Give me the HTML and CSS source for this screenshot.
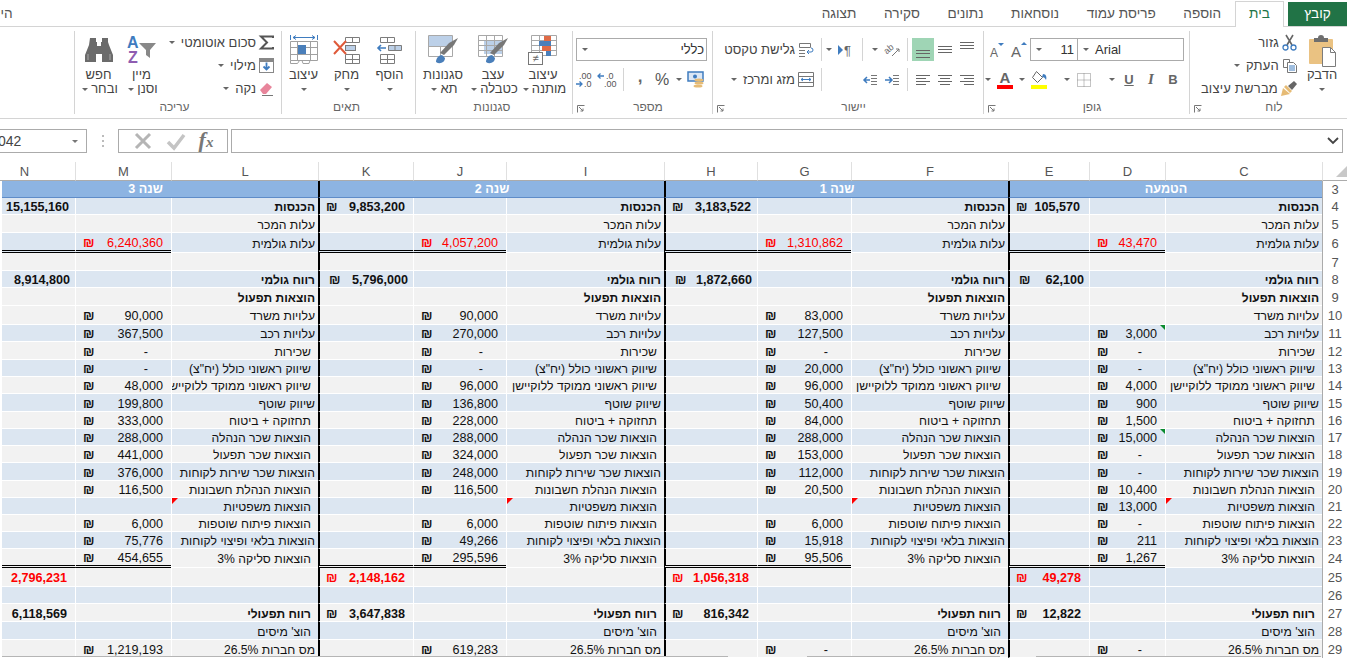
FILE: index.html
```
<!DOCTYPE html>
<html lang="he" dir="rtl">
<head>
    <meta charset="UTF-8">
    <meta name="viewport" content="width=device-width, initial-scale=1.0">
    <title>תחזית רווח והפסד</title>
    <link rel="stylesheet" href="styles.css">
</head>
<body>
    <!-- טאבים -->
    <nav class="tabs">
        <div class="tab tab-file">קובץ</div>
        <div class="tab tab-active">בית</div>
        <div class="tab">הוספה</div>
        <div class="tab">פריסת עמוד</div>
        <div class="tab">נוסחאות</div>
        <div class="tab">נתונים</div>
        <div class="tab">סקירה</div>
        <div class="tab">תצוגה</div>
        <div class="tab tab-cut">היי</div>
    </nav>

    <!-- רצועת כלים -->
    <section class="ribbon">
        <div class="group g-clip">
            <div class="group-body">
                <div class="big b-paste">
                    <div class="big-icon">
                        <svg width="30" height="34" viewBox="0 0 30 34"><rect x="2" y="6" width="24" height="25" rx="1" fill="#eac282"/><path d="M7 5h4a3 3 0 0 1 6 0h4v4H7z" fill="#6e6e6e"/><path d="M15.500 14.500h8l5 5v14h-13z" fill="#fff" stroke="#7c7c7c"/><path d="M23.500 14.500v5h5" fill="none" stroke="#7c7c7c"/></svg>
                    </div>
                    <div class="big-label">הדבק</div>
                    <i class="caret caret-line"></i>
                </div>
                <div class="stack">
                    <div class="sm">
                        <svg width="15" height="17" viewBox="0 0 15 17"><path d="M4 1l6 10M11 1L5 11" stroke="#666" stroke-width="1.600" fill="none"/><circle cx="3.500" cy="13.500" r="2.500" fill="none" stroke="#3f7cbf" stroke-width="1.300"/><circle cx="11.500" cy="13.500" r="2.500" fill="none" stroke="#3f7cbf" stroke-width="1.300"/></svg>
                        <span>גזור</span>
                    </div>
                    <div class="sm">
                        <svg width="15" height="15" viewBox="0 0 15 15"><path d="M1.500 1.500h6v8h-6z" fill="#fff" stroke="#777"/><path d="M5.500 4.500h6l3 3v7h-9z" fill="#fff" stroke="#777"/><path d="M7 8h6M7 10h6M7 12h6" stroke="#3f7cbf"/></svg>
                        <span>העתק</span>
                        <i class="caret"></i>
                    </div>
                    <div class="sm">
                        <svg width="16" height="16" viewBox="0 0 16 16"><path d="M0 15l2-8 7 6z" fill="#e6bb75"/><path d="M3 6l6 6 2-2-6-6z" fill="#e6bb75"/><path d="M7 5l4 4 5-6-3-3z" fill="#666"/></svg>
                        <span>מברשת עיצוב</span>
                    </div>
                </div>
            </div>
            <div class="group-name with-launcher">לוח</div>
            <svg class="launcher" width="8" height="8" viewBox="0 0 8 8"><path d="M.5 7.500v-7h7M2 2l4 4M6 3.500V6H3.500" fill="none" stroke="#777"/></svg>
        </div>

        <div class="group g-font">
            <div class="group-body rows">
                <div class="row">
                    <div class="select select-font"><i class="caret"></i><span>Arial</span></div>
                    <div class="select select-size"><i class="caret"></i><span>11</span></div>
                    <div class="slot">
                        <svg width="20" height="20" viewBox="0 0 20 20"><text x="2" y="17" class="svg-a" font-size="15">A</text><path d="M12 5l3-3 3 3z" fill="#3f7cbf"/></svg>
                    </div>
                    <div class="slot">
                        <svg width="20" height="20" viewBox="0 0 20 20"><text x="3" y="17" class="svg-a" font-size="12">A</text><path d="M11 3l3 3 3-3z" fill="#3f7cbf"/></svg>
                    </div>
                </div>
                <div class="row">
                    <div class="slot fs fs-b">B</div>
                    <div class="slot fs fs-i">I</div>
                    <div class="slot fs fs-u">U</div>
                    <i class="caret"></i>
                    <div class="sep"></div>
                    <div class="slot">
                        <svg width="14" height="14" viewBox="0 0 14 14"><path d="M.500.500h13v13H.500zM.500 7h13M7 .500v13" fill="none" stroke="#888" stroke-dasharray="1 1"/></svg>
                    </div>
                    <i class="caret"></i>
                    <div class="sep"></div>
                    <div class="slot">
                        <svg width="18" height="19" viewBox="0 0 18 19"><path d="M6.500 1.500l6 6-5 5-5-5z" fill="#fff" stroke="#666"/><path d="M13 4c3 0 4 3 3 6-1-2-2-3-4-3z" fill="#3f7cbf"/><rect x="1" y="15" width="16" height="4" fill="#ff0"/></svg>
                    </div>
                    <i class="caret"></i>
                    <div class="slot">
                        <svg width="18" height="19" viewBox="0 0 18 19"><text x="9" y="13" text-anchor="middle" class="svg-a" font-size="15" font-weight="bold">A</text><rect x="1" y="15" width="16" height="4" fill="#f00"/></svg>
                    </div>
                    <i class="caret"></i>
                </div>
            </div>
            <div class="group-name with-launcher">גופן</div>
            <svg class="launcher" width="8" height="8" viewBox="0 0 8 8"><path d="M.5 7.500v-7h7M2 2l4 4M6 3.500V6H3.500" fill="none" stroke="#777"/></svg>
        </div>

        <div class="group g-align">
            <div class="group-body">
                <div class="align-main rows">
                    <div class="row">
                        <div class="slot"><svg width="16" height="16" viewBox="0 0 16 16"><path d="M1 .500h14M1 3.500h14M1 6.500h14" stroke="#666"/></svg></div>
                        <div class="slot"><svg width="16" height="16" viewBox="0 0 16 16"><path d="M1 4.500h14M1 7.500h14M1 10.500h14" stroke="#666"/></svg></div>
                        <div class="slot slot-on"><svg width="16" height="16" viewBox="0 0 16 16"><path d="M1 8.500h14M1 11.500h14M1 15.500h14" stroke="#666"/></svg></div>
                        <div class="sep sep-a"></div>
                        <div class="slot">
                            <svg width="18" height="18" viewBox="0 0 18 18"><text x="1" y="10" transform="rotate(-40 7 8)" class="svg-a" font-size="9">ab</text><path d="M9 15l7-7M16 11V8h-3" fill="none" stroke="#777"/></svg>
                        </div>
                        <i class="caret"></i>
                        <div class="sep"></div>
                        <div class="slot">
                            <svg width="18" height="14" viewBox="0 0 18 14"><path d="M1 2l5 5-5 5z" fill="#3f7cbf"/><text x="7" y="12" class="svg-a" font-size="13">¶</text></svg>
                        </div>
                        <i class="caret"></i>
                    </div>
                    <div class="row">
                        <div class="slot"><svg width="16" height="16" viewBox="0 0 16 16"><path d="M1 3.500h14M5 6.500h10M1 9.500h14M5 12.500h10" stroke="#666"/></svg></div>
                        <div class="slot"><svg width="16" height="16" viewBox="0 0 16 16"><path d="M1 3.500h14M3 6.500h10M1 9.500h14M3 12.500h10" stroke="#666"/></svg></div>
                        <div class="slot"><svg width="16" height="16" viewBox="0 0 16 16"><path d="M1 3.500h14M1 6.500h10M1 9.500h14M1 12.500h10" stroke="#666"/></svg></div>
                        <div class="sep sep-a"></div>
                        <div class="slot"><svg width="16" height="14" viewBox="0 0 16 14"><path d="M1 7h6M5 4l3 3-3 3" fill="none" stroke="#3f7cbf" stroke-width="1.500"/><path d="M9 2.500h6M9 5.500h6M9 8.500h6M9 11.500h6" stroke="#777"/></svg></div>
                        <div class="slot"><svg width="16" height="14" viewBox="0 0 16 14"><path d="M8 7H2M5 4L2 7l3 3" fill="none" stroke="#3f7cbf" stroke-width="1.500"/><path d="M9 2.500h6M9 5.500h6M9 8.500h6M9 11.500h6" stroke="#777"/></svg></div>
                    </div>
                </div>
                <div class="align-wrap rows">
                    <div class="row">
                        <div class="sm sm-flat">
                            <svg width="16" height="15" viewBox="0 0 16 15"><path d="M1.500 1.500h11v4h-11zM1 8.500h6M1 11.500h6M1 14.500h6" fill="none" stroke="#777"/><path d="M9 10h4a2 2 0 0 0 0-4M11 8l-2 2 2 2" fill="none" stroke="#3f7cbf"/></svg>
                            <span>גלישת טקסט</span>
                        </div>
                    </div>
                    <div class="row">
                        <div class="sm sm-flat">
                            <svg width="16" height="15" viewBox="0 0 16 15"><path d="M.500.500h15v14H.500zM.500 4.500h15M.500 10.500h15" fill="none" stroke="#777"/><path d="M3 7.500h10M5 6L3 7.500 5 9M11 6l2 1.500L11 9" fill="none" stroke="#3f7cbf"/></svg>
                            <span>מזג ומרכז</span>
                            <i class="caret"></i>
                        </div>
                    </div>
                </div>
            </div>
            <div class="group-name with-launcher">יישור</div>
            <svg class="launcher" width="8" height="8" viewBox="0 0 8 8"><path d="M.5 7.500v-7h7M2 2l4 4M6 3.500V6H3.500" fill="none" stroke="#777"/></svg>
        </div>

        <div class="group g-number">
            <div class="group-body rows">
                <div class="row">
                    <div class="select select-num"><span>כללי</span><i class="caret"></i></div>
                </div>
                <div class="row">
                    <div class="slot">
                        <svg width="18" height="17" viewBox="0 0 18 17"><rect x="1" y="1" width="15" height="9" fill="#dbe7f5" stroke="#3f7cbf" stroke-width="1.500"/><circle cx="8" cy="5.500" r="2" fill="#3f7cbf"/><ellipse cx="12" cy="9" rx="4.500" ry="1.600" fill="#e6bb75"/><ellipse cx="12" cy="12" rx="4.500" ry="1.600" fill="#e6bb75"/><ellipse cx="11" cy="15" rx="4.500" ry="1.600" fill="#e6bb75"/></svg>
                    </div>
                    <i class="caret"></i>
                    <div class="slot fs fs-pct">%</div>
                    <div class="slot fs fs-comma">,</div>
                    <div class="sep sep-n"></div>
                    <div class="slot">
                        <svg width="20" height="17" viewBox="0 0 20 17"><text x="9" y="8" class="svg-d">.0</text><text x="7" y="16" class="svg-d">.00</text><path d="M7 5H1M3.500 2.500L1 5l2.500 2.500" fill="none" stroke="#3f7cbf" stroke-width="1.300"/></svg>
                    </div>
                    <div class="slot">
                        <svg width="20" height="17" viewBox="0 0 20 17"><text x="4" y="8" class="svg-d">.00</text><text x="9" y="16" class="svg-d">.0</text><path d="M1 13h6M4.500 10.500L7 13l-2.500 2.500" fill="none" stroke="#3f7cbf" stroke-width="1.300"/></svg>
                    </div>
                </div>
            </div>
            <div class="group-name with-launcher">מספר</div>
            <svg class="launcher" width="8" height="8" viewBox="0 0 8 8"><path d="M.5 7.500v-7h7M2 2l4 4M6 3.500V6H3.500" fill="none" stroke="#777"/></svg>
        </div>

        <div class="group g-styles">
            <div class="group-body">
                <div class="big">
                    <div class="big-icon">
                        <svg width="30" height="32" viewBox="0 0 30 32"><path d="M3.500 1.500h25v20h-25zM3.500 6.500h25M3.500 11.500h25M3.500 16.500h25M11.500 1.500v20M20.500 1.500v20" fill="none" stroke="#a8a8a8"/><rect x="16" y="2" width="7" height="5" fill="#df6a46"/><rect x="11" y="7" width="12" height="5" fill="#4a7fba"/><rect x="14" y="12" width="9" height="5" fill="#df6a46"/><rect x="18" y="17" width="5" height="5" fill="#4a7fba"/><rect x=".500" y="18.500" width="14" height="12" fill="#fff" stroke="#777"/><text x="7.500" y="28" text-anchor="middle" class="svg-a" font-size="11">≠</text></svg>
                    </div>
                    <div class="big-label">עיצוב<br><span>מותנה</span><i class="caret"></i></div>
                </div>
                <div class="big">
                    <div class="big-icon">
                        <svg width="32" height="32" viewBox="0 0 32 32"><rect x="7" y="7" width="19" height="13" fill="#bcd0e8"/><path d="M1.500 1.500h24v21h-24zM1.500 6.500h24M1.500 11.500h24M1.500 16.500h24M9.500 1.500v21M17.500 1.500v21" fill="none" stroke="#a8a8a8"/><path d="M17 21l10-10 4-7-9 5-9 10z" fill="#777"/><path d="M9 28c0-4 3-7 6-7l3 3c0 4-5 7-9 4z" fill="#4a7fba"/></svg>
                    </div>
                    <div class="big-label">עצב<br><span>כטבלה</span><i class="caret"></i></div>
                </div>
                <div class="big">
                    <div class="big-icon">
                        <svg width="32" height="32" viewBox="0 0 32 32"><rect x="2" y="2" width="23" height="10" fill="#bcd0e8"/><path d="M1.500 1.500h24v21h-24zM1.500 12.500h24" fill="none" stroke="#a8a8a8"/><path d="M13.500 12.500v10" stroke="#a8a8a8"/><path d="M17 21l10-10 4-7-9 5-9 10z" fill="#777"/><path d="M9 28c0-4 3-7 6-7l3 3c0 4-5 7-9 4z" fill="#4a7fba"/></svg>
                    </div>
                    <div class="big-label">סגנונות<br><span>תא</span><i class="caret"></i></div>
                </div>
            </div>
            <div class="group-name">סגנונות</div>
        </div>

        <div class="group g-cells">
            <div class="group-body">
                <div class="big big-cell">
                    <div class="big-icon">
                        <svg width="27" height="28" viewBox="0 0 27 28"><path d="M4.500 1.500h14v5h-14zM11.500 1.500v5M4.500 18.500h14v9h-14zM4.500 23.500h14M11.500 18.500v9" fill="none" stroke="#7c7c7c"/><path d="M12.500 9.500h13v5h-13zM19 9.500v5" fill="#bcd0e8" stroke="#7c7c7c"/><path d="M10 12H2M5 9l-3 3 3 3" fill="none" stroke="#3f7cbf" stroke-width="1.600"/></svg>
                    </div>
                    <div class="big-label">הוסף</div>
                    <i class="caret caret-line"></i>
                </div>
                <div class="big big-cell">
                    <div class="big-icon">
                        <svg width="27" height="28" viewBox="0 0 27 28"><path d="M12.500 1.500h14v5h-14zM19.500 1.500v5M12.500 18.500h14v9h-14zM12.500 23.500h14M19.500 18.500v9" fill="none" stroke="#7c7c7c"/><rect x="12.500" y="9.500" width="10" height="5" fill="#bcd0e8" stroke="#7c7c7c"/><path d="M1 5l12 13M13 5L1 18" stroke="#df5a3a" stroke-width="2"/></svg>
                    </div>
                    <div class="big-label">מחק</div>
                    <i class="caret caret-line"></i>
                </div>
                <div class="big big-cell">
                    <div class="big-icon">
                        <svg width="28" height="31" viewBox="0 0 28 31"><path d="M.500 1v5M27.500 1v5M3 3.500h22M6 1.500L3 3.500l3 2M22 1.500l3 2-3 2" fill="none" stroke="#3f7cbf"/><path d="M.500 7.500h27v19h-27zM.500 13.500h27M.500 20.500h27M7.500 7.500v19M20.500 7.500v19" fill="none" stroke="#a0a0a0"/><rect x="8" y="11" width="8" height="9" fill="#4a7fba"/><path d="M.500 26.500v3h7l2-3M12 26.500l1 3h6l1-3" fill="none" stroke="#a0a0a0"/></svg>
                    </div>
                    <div class="big-label">עיצוב</div>
                    <i class="caret caret-line"></i>
                </div>
            </div>
            <div class="group-name">תאים</div>
        </div>

        <div class="group g-edit">
            <div class="group-body">
                <div class="stack stack-edit">
                    <div class="sm">
                        <svg width="15" height="15" viewBox="0 0 15 15"><path d="M14 3V1.500H2L8 7.500 2 13.500h12V12" fill="none" stroke="#555" stroke-width="2"/></svg>
                        <span>סכום אוטומטי</span>
                        <i class="caret"></i>
                    </div>
                    <div class="sm">
                        <svg width="15" height="15" viewBox="0 0 15 15"><rect x=".500" y=".500" width="14" height="14" fill="#fff" stroke="#888"/><rect x="1" y="1" width="13" height="3" fill="#888"/><path d="M7.500 4.500v7M4.500 8.500l3 3 3-3" fill="none" stroke="#3f7cbf" stroke-width="1.800"/></svg>
                        <span>מילוי</span>
                        <i class="caret"></i>
                    </div>
                    <div class="sm">
                        <svg width="15" height="15" viewBox="0 0 15 15"><path d="M1 9l7-7 5 4-6 7H4z" fill="#e8859b"/><path d="M3 14.500h11" stroke="#777"/></svg>
                        <span>נקה</span>
                        <i class="caret"></i>
                    </div>
                </div>
                <div class="big big-cell">
                    <div class="big-icon">
                        <svg width="30" height="32" viewBox="0 0 30 32"><text x="0" y="14" class="svg-s" fill="#3f7cbf">A</text><text x="1" y="29" class="svg-s" fill="#8e5cb0">Z</text><path d="M12 9h17l-6 7v8l-4-3v-5z" fill="#888"/></svg>
                    </div>
                    <div class="big-label">מיין<br><span>וסנן</span><i class="caret"></i></div>
                </div>
                <div class="big big-cell">
                    <div class="big-icon">
                        <svg width="28" height="26" viewBox="0 0 28 26"><path d="M5 1h6v4h1v4h4V5h1V1h6v4l1 3 4 10v7H17v-8h-6v8H0v-7L4 8z" fill="#6b6b6b"/><path d="M3 17v6M25 17v6" stroke="#aaa"/></svg>
                    </div>
                    <div class="big-label">חפש<br><span>ובחר</span><i class="caret"></i></div>
                </div>
            </div>
            <div class="group-name">עריכה</div>
        </div>
    </section>

    <!-- שורת נוסחאות -->
    <section class="formula-bar">
        <div class="name-box"><span>042</span><i class="caret caret-dark"></i></div>
        <div class="dots"></div>
        <div class="fx-box">
            <svg width="20" height="20" viewBox="0 0 20 20"><path d="M3 3l14 14M17 3L3 17" stroke="#b5b5b5" stroke-width="3"/></svg>
            <svg width="20" height="20" viewBox="0 0 20 20"><path d="M2 11l6 6L18 4" fill="none" stroke="#c4c4c4" stroke-width="3.500"/></svg>
            <span class="fx">f<small>x</small></span>
        </div>
        <div class="formula-input">
            <svg width="12" height="8" viewBox="0 0 12 8"><path d="M1 1l5 5 5-5" fill="none" stroke="#444" stroke-width="1.800"/></svg>
        </div>
    </section>

    <!-- גיליון -->
    <main class="sheet">
        <table class="grid">
            <colgroup>
                <col class="c-rn"><col class="c-c"><col class="c-d"><col class="c-e"><col class="c-f"><col class="c-g"><col class="c-h"><col class="c-i"><col class="c-j"><col class="c-k"><col class="c-l"><col class="c-m"><col class="c-n">
            </colgroup>
            <thead>
                <tr>
                    <th class="corner"><svg width="11" height="11" viewBox="0 0 11 11"><path d="M11 0v11H0z" fill="#c8c8c8"/></svg></th>
                    <th>C</th><th>D</th><th>E</th><th>F</th><th>G</th><th>H</th><th>I</th><th>J</th><th>K</th><th>L</th><th>M</th><th>N</th>
                </tr>
            </thead>
            <tbody>
                <tr class="yr h17"><th>3</th><td colspan="3" class="thick">הטמעה</td><td colspan="3" class="thick">שנה 1</td><td colspan="3" class="thick">שנה 2</td><td colspan="3">שנה 3</td></tr>
                <tr class="h17 blue bd"><th>4</th><td>הכנסות</td><td></td><td class="n e9"><i>₪</i>105,570</td><td>הכנסות</td><td></td><td class="n e6"><i>₪</i>3,183,522</td><td>הכנסות</td><td></td><td class="n"><i>₪</i>9,853,200</td><td>הכנסות</td><td></td><td class="n e6">15,155,160</td></tr>
                <tr class="h18"><th>5</th><td>עלות המכר</td><td></td><td></td><td>עלות המכר</td><td></td><td></td><td>עלות המכר</td><td></td><td></td><td>עלות המכר</td><td></td><td></td></tr>
                <tr class="h20 blue dbl"><th>6</th><td class="lb">עלות גולמית</td><td class="n red"><i>₪</i>43,470</td><td></td><td class="lb">עלות גולמית</td><td class="n red"><i>₪</i>1,310,862</td><td></td><td class="lb">עלות גולמית</td><td class="n red"><i>₪</i>4,057,200</td><td></td><td class="lb">עלות גולמית</td><td class="n red"><i>₪</i>6,240,360</td><td></td></tr>
                <tr class="h18"><th>7</th><td></td><td></td><td></td><td></td><td></td><td></td><td></td><td></td><td></td><td></td><td></td><td></td></tr>
                <tr class="h17 blue bd shift"><th>8</th><td>רווח גולמי</td><td></td><td class="n"><i>₪</i>62,100</td><td>רווח גולמי</td><td></td><td class="n"><i>₪</i>1,872,660</td><td>רווח גולמי</td><td></td><td class="n"><i>₪</i>5,796,000</td><td>רווח גולמי</td><td></td><td class="n">8,914,800</td></tr>
                <tr class="h18 bd"><th>9</th><td>הוצאות תפעול</td><td></td><td></td><td>הוצאות תפעול</td><td></td><td></td><td>הוצאות תפעול</td><td></td><td></td><td>הוצאות תפעול</td><td></td><td></td></tr>
                <tr class="h19"><th>10</th><td>עלויות משרד</td><td></td><td></td><td>עלויות משרד</td><td class="n"><i>₪</i>83,000</td><td></td><td>עלויות משרד</td><td class="n"><i>₪</i>90,000</td><td></td><td>עלויות משרד</td><td class="n"><i>₪</i>90,000</td><td></td></tr>
                <tr class="h17 blue"><th>11</th><td>עלויות רכב</td><td class="n green"><i>₪</i>3,000</td><td></td><td>עלויות רכב</td><td class="n"><i>₪</i>127,500</td><td></td><td>עלויות רכב</td><td class="n"><i>₪</i>270,000</td><td></td><td>עלויות רכב</td><td class="n"><i>₪</i>367,500</td><td></td></tr>
                <tr class="h18 ind"><th>12</th><td>שכירות</td><td class="n d"><i>₪</i>-</td><td></td><td>שכירות</td><td class="n d"><i>₪</i>-</td><td></td><td>שכירות</td><td class="n d"><i>₪</i>-</td><td></td><td>שכירות</td><td class="n d"><i>₪</i>-</td><td></td></tr>
                <tr class="h17 blue ind"><th>13</th><td>שיווק ראשוני כולל (יח"צ)</td><td class="n d"><i>₪</i>-</td><td></td><td>שיווק ראשוני כולל (יח"צ)</td><td class="n"><i>₪</i>20,000</td><td></td><td>שיווק ראשוני כולל (יח"צ)</td><td class="n d"><i>₪</i>-</td><td></td><td>שיווק ראשוני כולל (יח"צ)</td><td class="n d"><i>₪</i>-</td><td></td></tr>
                <tr class="h17 ind"><th>14</th><td>שיווק ראשוני ממוקד ללוקיישן</td><td class="n"><i>₪</i>4,000</td><td></td><td>שיווק ראשוני ממוקד ללוקיישן</td><td class="n"><i>₪</i>96,000</td><td></td><td>שיווק ראשוני ממוקד ללוקיישן</td><td class="n"><i>₪</i>96,000</td><td></td><td>שיווק ראשוני ממוקד ללוקיישן</td><td class="n"><i>₪</i>48,000</td><td></td></tr>
                <tr class="h18 blue"><th>15</th><td>שיווק שוטף</td><td class="n"><i>₪</i>900</td><td></td><td>שיווק שוטף</td><td class="n"><i>₪</i>50,400</td><td></td><td>שיווק שוטף</td><td class="n"><i>₪</i>136,800</td><td></td><td>שיווק שוטף</td><td class="n"><i>₪</i>199,800</td><td></td></tr>
                <tr class="h17 ind"><th>16</th><td>תחזוקה + ביטוח</td><td class="n"><i>₪</i>1,500</td><td></td><td>תחזוקה + ביטוח</td><td class="n"><i>₪</i>84,000</td><td></td><td>תחזוקה + ביטוח</td><td class="n"><i>₪</i>228,000</td><td></td><td>תחזוקה + ביטוח</td><td class="n"><i>₪</i>333,000</td><td></td></tr>
                <tr class="h17 blue ind"><th>17</th><td>הוצאות שכר הנהלה</td><td class="n green"><i>₪</i>15,000</td><td></td><td>הוצאות שכר הנהלה</td><td class="n"><i>₪</i>288,000</td><td></td><td>הוצאות שכר הנהלה</td><td class="n"><i>₪</i>288,000</td><td></td><td>הוצאות שכר הנהלה</td><td class="n"><i>₪</i>288,000</td><td></td></tr>
                <tr class="h17 ind"><th>18</th><td>הוצאות שכר תפעול</td><td class="n d"><i>₪</i>-</td><td></td><td>הוצאות שכר תפעול</td><td class="n"><i>₪</i>153,000</td><td></td><td>הוצאות שכר תפעול</td><td class="n"><i>₪</i>324,000</td><td></td><td>הוצאות שכר תפעול</td><td class="n"><i>₪</i>441,000</td><td></td></tr>
                <tr class="h18 blue"><th>19</th><td>הוצאות שכר שירות לקוחות</td><td class="n d"><i>₪</i>-</td><td></td><td>הוצאות שכר שירות לקוחות</td><td class="n"><i>₪</i>112,000</td><td></td><td>הוצאות שכר שירות לקוחות</td><td class="n"><i>₪</i>248,000</td><td></td><td>הוצאות שכר שירות לקוחות</td><td class="n"><i>₪</i>376,000</td><td></td></tr>
                <tr class="h17 ind"><th>20</th><td>הוצאות הנהלת חשבונות</td><td class="n"><i>₪</i>10,400</td><td></td><td>הוצאות הנהלת חשבונות</td><td class="n"><i>₪</i>20,500</td><td></td><td>הוצאות הנהלת חשבונות</td><td class="n"><i>₪</i>116,500</td><td></td><td>הוצאות הנהלת חשבונות</td><td class="n"><i>₪</i>116,500</td><td></td></tr>
                <tr class="h17 blue ind"><th>21</th><td class="note">הוצאות משפטיות</td><td class="n"><i>₪</i>13,000</td><td></td><td class="note">הוצאות משפטיות</td><td></td><td></td><td class="note">הוצאות משפטיות</td><td></td><td></td><td class="note">הוצאות משפטיות</td><td></td><td></td></tr>
                <tr class="h17 ind"><th>22</th><td>הוצאות פיתוח שוטפות</td><td class="n d"><i>₪</i>-</td><td></td><td>הוצאות פיתוח שוטפות</td><td class="n"><i>₪</i>6,000</td><td></td><td>הוצאות פיתוח שוטפות</td><td class="n"><i>₪</i>6,000</td><td></td><td>הוצאות פיתוח שוטפות</td><td class="n"><i>₪</i>6,000</td><td></td></tr>
                <tr class="h17 blue"><th>23</th><td>הוצאות בלאי ופיצוי לקוחות</td><td class="n"><i>₪</i>211</td><td></td><td>הוצאות בלאי ופיצוי לקוחות</td><td class="n"><i>₪</i>15,918</td><td></td><td>הוצאות בלאי ופיצוי לקוחות</td><td class="n"><i>₪</i>49,266</td><td></td><td>הוצאות בלאי ופיצוי לקוחות</td><td class="n"><i>₪</i>75,776</td><td></td></tr>
                <tr class="h18 ind dbl"><th>24</th><td>הוצאות סליקה 3%</td><td class="n"><i>₪</i>1,267</td><td></td><td>הוצאות סליקה 3%</td><td class="n"><i>₪</i>95,506</td><td></td><td>הוצאות סליקה 3%</td><td class="n"><i>₪</i>295,596</td><td></td><td>הוצאות סליקה 3%</td><td class="n"><i>₪</i>454,655</td><td></td></tr>
                <tr class="h19 bd first-blue"><th>25</th><td></td><td></td><td class="n red"><i>₪</i>49,278</td><td></td><td></td><td class="n red"><i>₪</i>1,056,318</td><td></td><td></td><td class="n red"><i>₪</i>2,148,162</td><td></td><td></td><td class="n red">2,796,231</td></tr>
                <tr class="h17 blue"><th>26</th><td></td><td></td><td></td><td></td><td></td><td></td><td></td><td></td><td></td><td></td><td></td><td></td></tr>
                <tr class="h18 bd ind"><th>27</th><td>רווח תפעולי</td><td></td><td class="n"><i>₪</i>12,822</td><td>רווח תפעולי</td><td></td><td class="n"><i>₪</i>816,342</td><td>רווח תפעולי</td><td></td><td class="n"><i>₪</i>3,647,838</td><td>רווח תפעולי</td><td></td><td class="n">6,118,569</td></tr>
                <tr class="h18 blue ind"><th>28</th><td>הוצ' מיסים</td><td></td><td></td><td>הוצ' מיסים</td><td></td><td></td><td>הוצ' מיסים</td><td></td><td></td><td>הוצ' מיסים</td><td></td><td></td></tr>
                <tr class="h18"><th>29</th><td>מס חברות 26.5%</td><td class="n d"><i>₪</i>-</td><td></td><td>מס חברות 26.5%</td><td class="n d"><i>₪</i>-</td><td></td><td>מס חברות 26.5%</td><td class="n"><i>₪</i>619,283</td><td></td><td>מס חברות 26.5%</td><td class="n"><i>₪</i>1,219,193</td><td></td></tr>
            </tbody>
        </table>
        <div class="sheet-foot">
            <div class="foot-line foot-a"></div>
            <div class="foot-line foot-b"></div>
            <div class="foot-line foot-c"></div>
        </div>
    </main>
</body>
</html>
```

FILE: styles.css
```
* {
    box-sizing: border-box;
}

html, body {
    margin: 0;
    width: 1347px;
    height: 658px;
    overflow: hidden;
    background: white;
}

body {
    font-family: "Liberation Sans", Arial, sans-serif;
    font-size: 13px;
    color: #444;
}

i {
    font-style: normal;
}

svg {
    direction: ltr;
    overflow: visible;
}

/* טאבים */
.tabs {
    display: flex;
    align-items: flex-end;
    height: 27px;
    border-bottom: 1px solid #d4d4d4;
}

.tab {
    height: 24px;
    padding: 0 13.8px;
    line-height: 23px;
    font-size: 13.6px;
    color: #555;
    white-space: nowrap;
}

.tab-file {
    width: 59px;
    margin-left: 4px;
    padding: 0;
    text-align: center;
    background: #217346;
    color: white;
}

.tab-active {
    width: 49px;
    height: 26px;
    margin-bottom: -1px;
    padding: 0;
    text-align: center;
    line-height: 24px;
    background: white;
    border: 1px solid #d4d4d4;
    border-bottom: none;
    color: #217346;
}

.tab-cut {
    margin-right: auto;
    padding: 0;
    margin-left: -3px;
}

/* רצועה */
.ribbon {
    display: flex;
    height: 92px;
    padding-top: 4px;
    border-bottom: 1px solid #d4d4d4;
}

.group {
    position: relative;
    display: flex;
    flex-direction: column;
    height: 83px;
    border-left: 1px solid #d4d4d4;
}

.g-clip { width: 158px; padding-right: 5px; }
.g-font { width: 206px; padding-right: 5px; }
.g-align { width: 271px; padding-right: 5px; }
.g-number { width: 140px; padding-right: 5px; }
.g-styles { width: 157px; padding-right: 4px; }
.g-cells { width: 134px; padding-right: 4px; }
.g-edit { width: 207px; padding-right: 7px; }

.group-body {
    display: flex;
    height: 69px;
}

.group-name {
    height: 14px;
    line-height: 14px;
    text-align: center;
    font-size: 12px;
    color: #666;
}

.with-launcher {
    padding-left: 16px;
}

.launcher {
    position: absolute;
    left: 4px;
    bottom: 1px;
}

.big {
    display: flex;
    flex-direction: column;
    align-items: center;
    width: 50px;
}

.b-paste {
    width: 40px;
}

.big-cell {
    width: 43px;
}

.big-icon {
    display: flex;
    align-items: center;
    justify-content: center;
    height: 37px;
}

.big-label {
    line-height: 14px;
    text-align: center;
    white-space: nowrap;
}

.big-label .caret {
    margin-right: 3px;
    vertical-align: middle;
}

.caret {
    display: inline-block;
    flex: none;
    width: 0;
    height: 0;
    margin: 0 3px;
    border: 3px solid transparent;
    border-top-color: #666;
    border-bottom: 0;
}

.caret-line {
    margin-top: 6px;
}

.caret-dark {
    border-top-color: #777;
}

.stack {
    display: flex;
    flex-direction: column;
    padding-right: 0;
}

.stack-edit {
    width: 111px;
}

.sm {
    display: flex;
    align-items: center;
    height: 23px;
    gap: 3px;
    white-space: nowrap;
}

.stack .sm svg {
    flex: none;
}

.g-clip .stack {
    margin-right: 5px;
}

.g-clip .sm span {
    letter-spacing: .2px;
}

.sm-flat {
    height: 23px;
}

.rows {
    flex-direction: column;
    padding-top: 7px;
    gap: 7px;
}

.row {
    display: flex;
    align-items: center;
    height: 23px;
}

.slot {
    display: flex;
    flex: none;
    align-items: center;
    justify-content: center;
    width: 22px;
    height: 23px;
}

.slot-on {
    background: #9fd5b5;
}

.sep {
    width: 1px;
    height: 23px;
    margin-right: 6px;
    margin-left: 5px;
    background: #d4d4d4;
}

.sep-a {
    margin-right: 4px;
    margin-left: 4px;
}

.sep-n {
    margin-right: 5px;
    margin-left: 5px;
}

.select {
    display: flex;
    align-items: center;
    height: 23px;
    direction: ltr;
    background: white;
    border: 1px solid #ababab;
    color: #333;
}

.select-font {
    width: 107px;
    gap: 3px;
    padding-left: 2px;
}

.select-size {
    width: 48px;
    margin-right: -1px;
    justify-content: space-between;
    padding-right: 3px;
    padding-left: 2px;
}

.select-num {
    width: 131px;
    flex-direction: row-reverse;
    justify-content: space-between;
    padding-right: 2px;
    padding-left: 2px;
    direction: ltr;
}

.svg-a {
    font-family: "Liberation Sans", sans-serif;
    fill: #666;
}

.svg-d {
    font-family: "Liberation Sans", sans-serif;
    font-size: 9px;
    fill: #555;
}

.svg-s {
    font-family: "Liberation Sans", sans-serif;
    font-size: 16px;
    font-weight: bold;
}

.fs {
    color: #666;
    font-weight: bold;
    font-size: 13px;
}

.fs-i {
    font-family: "Liberation Serif", serif;
    font-style: italic;
    font-size: 15px;
}

.fs-u {
    text-decoration: underline;
}

.fs-pct {
    font-size: 16px;
    font-weight: normal;
    color: #555;
}

.fs-comma {
    font-size: 17px;
    padding-bottom: 6px;
    color: #666;
}

.align-main {
    display: flex;
    width: 156px;
    border-left: 1px solid transparent;
}

.align-wrap {
    display: flex;
    padding-right: 7px;
}

.align-wrap .row:first-child::before,
.align-wrap .row:last-child::before {
    content: "";
    width: 1px;
    height: 23px;
    margin-left: 7px;
    margin-right: -7px;
    background: #d4d4d4;
}

.align-wrap .sm {
    gap: 3px;
}

/* שורת נוסחאות */
.formula-bar {
    display: flex;
    direction: ltr;
    height: 41px;
    padding-top: 10px;
}

.name-box {
    display: flex;
    align-items: center;
    justify-content: space-between;
    width: 89px;
    height: 24px;
    padding-right: 5px;
    margin-left: -2px;
    border: 1px solid #ababab;
    border-left: none;
    font-size: 14px;
}

.dots {
    width: 2px;
    height: 12px;
    margin: 6px 14px 6px 15px;
    background: repeating-linear-gradient(#bbb 0 2px, transparent 2px 5px);
}

.fx-box {
    display: flex;
    align-items: center;
    justify-content: space-around;
    width: 110px;
    height: 24px;
    padding: 0 7px;
    border: 1px solid #ababab;
}

.fx {
    font-family: "Liberation Serif", serif;
    font-style: italic;
    font-weight: bold;
    font-size: 22px;
    line-height: 20px;
    color: #777;
}

.fx small {
    font-size: 15px;
}

.formula-input {
    display: flex;
    align-items: center;
    justify-content: flex-end;
    width: 1112px;
    height: 24px;
    margin-left: 3px;
    padding-right: 3px;
    border: 1px solid #ababab;
}

/* גיליון */
.sheet {
    position: relative;
    height: 498px;
    padding-top: 2px;
    overflow: hidden;
}

.sheet::before {
    content: "";
    position: absolute;
    left: 0;
    top: 21px;
    bottom: 0;
    width: 2px;
    background: white;
    z-index: 1;
}

.grid {
    table-layout: fixed;
    width: 1374px;
    border-collapse: separate;
    border-spacing: 0;
    font-size: 12.2px;
    color: #111;
}

.c-rn { width: 25px; }
.c-c { width: 157px; }
.c-d { width: 76px; }
.c-e { width: 81px; }
.c-f { width: 157px; }
.c-g { width: 94px; }
.c-h { width: 93px; }
.c-i { width: 158px; }
.c-j { width: 93px; }
.c-k { width: 95px; }
.c-l { width: 147px; }
.c-m { width: 96px; }
.c-n { width: 102px; }

.grid thead th {
    height: 19px;
    padding: 0;
    font-weight: normal;
    font-size: 13px;
    color: #555;
    background: white;
    border-left: 1px solid #e0e0e0;
    border-bottom: 1px solid #ababab;
}

.grid .corner {
    text-align: left;
    padding-left: 3px;
}

.corner svg {
    display: block;
}

.grid tbody th {
    padding: 0;
    font-weight: normal;
    font-size: 13px;
    color: #555;
    background: white;
    border-left: 1px solid #ababab;
}

.grid td {
    position: relative;
    padding: 2px 3px 0 0;
    line-height: 14px;
    white-space: nowrap;
    overflow: hidden;
    background: #f2f2f2;
    border-left: 1px solid white;
    border-bottom: 1px solid white;
}

.h17 { height: 17px; }
.h18 { height: 18px; }
.h19 { height: 19px; }
.h20 { height: 20px; }

.grid tr.blue td {
    background: #dce6f1;
}

.bd {
    font-weight: bold;
}

.bd td {
    font-size: 12px;
}

.ind td {
    padding-right: 7px;
}

.grid .yr td {
    padding: 0;
    text-align: center;
    font-size: 12.6px;
    font-weight: bold;
    color: white;
    background: #8db4e2;
    border-left: none;
    border-bottom: 1px solid #5f8cc8;
}

.grid .yr td.thick,
.grid tbody tr:not(.yr) td:nth-child(4),
.grid tbody tr:not(.yr) td:nth-child(7),
.grid tbody tr:not(.yr) td:nth-child(10) {
    border-left: 2px solid black;
}

.dbl td:not(:nth-child(3n+2)) {
    border-bottom: 3px double black;
}

.grid .first-blue td:nth-child(-n+4) {
    background: #dce6f1;
}

.grid td.n {
    padding: 2px 8px 0 7px;
    font-size: 12.6px;
    direction: ltr;
    text-align: right;
}

.n i {
    float: left;
    font-size: 13px;
    font-weight: bold;
}

.grid td:nth-child(4).n,
.grid td:nth-child(7).n,
.grid td:nth-child(10).n,
.grid td:nth-child(13).n {
    padding-left: 6px;
}

.grid td.e9 {
    padding-right: 9px;
}

.grid td.e6 {
    padding-right: 6px;
}

.grid .shift td:nth-child(3n+1).n {
    padding-left: 9px;
    padding-right: 5px;
}

.grid td.d {
    padding-right: 23px;
}

.red {
    color: #f00;
}

.green::after {
    content: "";
    position: absolute;
    top: 0;
    right: 0;
    border-top: 5px solid #0a8a2f;
    border-left: 5px solid transparent;
}

.note::after {
    content: "";
    position: absolute;
    top: 0;
    left: 0;
    border-top: 6px solid #f00;
    border-right: 6px solid transparent;
}

/* פס תחתון */
.sheet-foot {
    position: absolute;
    left: 0;
    right: 0;
    bottom: 0;
    display: flex;
    direction: ltr;
    height: 2px;
}

.foot-line {
    height: 2px;
    background: white;
    border-top: 1px solid #b5b5b5;
}

.foot-a { width: 728px; }
.foot-b { width: 193px; margin-left: 79px; }
.foot-c { width: 285px; margin-left: 36px; }
```
